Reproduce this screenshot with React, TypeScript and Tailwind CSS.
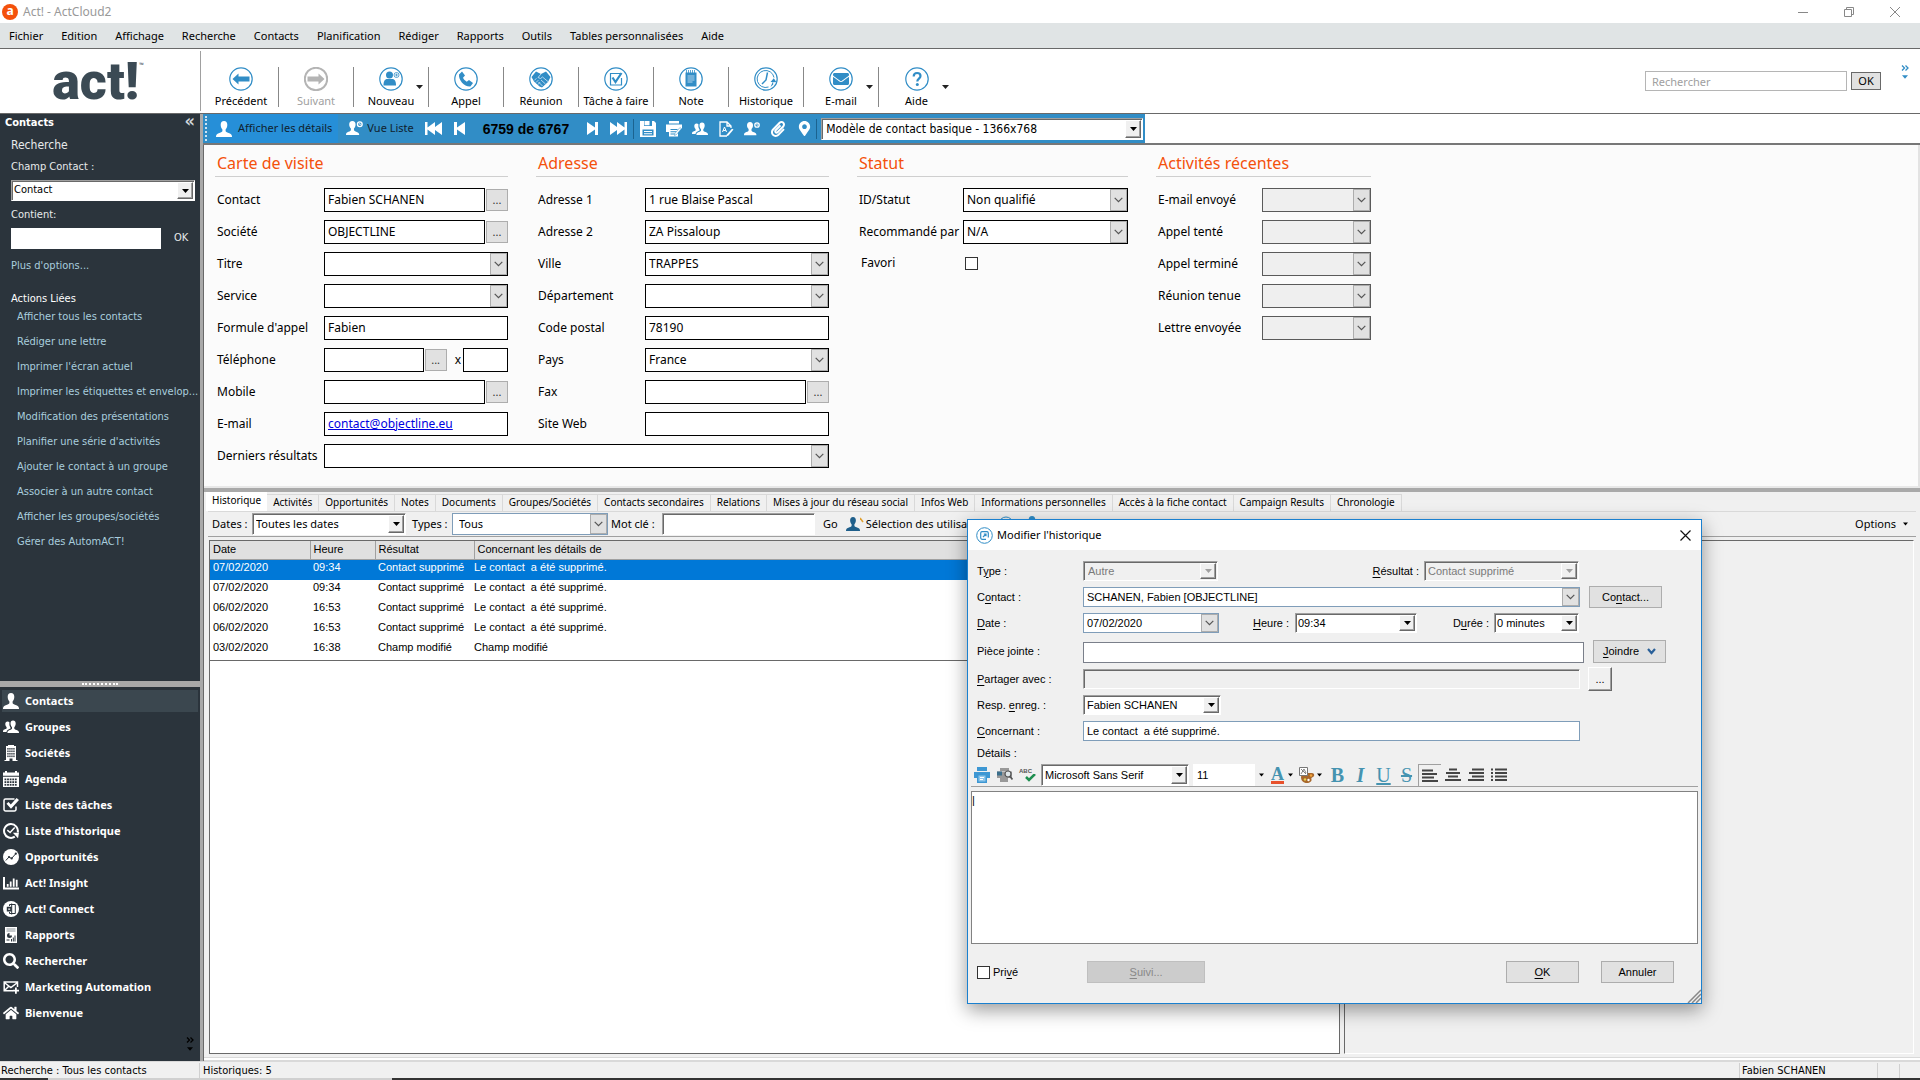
import { useId } from "react";
import type { ReactNode } from "react";
import { FaEnvelope, FaPaperclip, FaMapMarkerAlt, FaHome, FaSearch } from "react-icons/fa";

const tahoma = "font-['Noto_Sans','DejaVu_Sans',sans-serif]";
const sansSerif = "font-['Liberation_Sans','DejaVu_Sans',sans-serif]";
const condensed = "font-['DejaVu_Sans_Condensed','DejaVu_Sans',sans-serif]";

const sunken =
  "border border-t-[#a0a0a0] border-l-[#a0a0a0] border-r-white border-b-white shadow-[inset_1px_1px_0_#696969]";
const raised =
  "border border-t-white border-l-white border-r-[#696969] border-b-[#696969] shadow-[inset_-1px_-1px_0_#a0a0a0]";

const menus = ["Fichier", "Edition", "Affichage", "Recherche", "Contacts", "Planification", "Rédiger", "Rapports", "Outils", "Tables personnalisées", "Aide"];

const actions = [
  "Afficher tous les contacts",
  "Rédiger une lettre",
  "Imprimer l'écran actuel",
  "Imprimer les étiquettes et envelop...",
  "Modification des présentations",
  "Planifier une série d'activités",
  "Ajouter le contact à un groupe",
  "Associer à un autre contact",
  "Afficher les groupes/sociétés",
  "Gérer des AutomACT!",
];

const tabs = [
  "Activités", "Opportunités", "Notes", "Documents", "Groupes/Sociétés", "Contacts secondaires", "Relations",
  "Mises à jour du réseau social", "Infos Web", "Informations personnelles", "Accès à la fiche contact",
  "Campaign Results", "Chronologie",
];

const history = [
  ["07/02/2020", "09:34", "Contact supprimé", "Le contact  a été supprimé."],
  ["07/02/2020", "09:34", "Contact supprimé", "Le contact  a été supprimé."],
  ["06/02/2020", "16:53", "Contact supprimé", "Le contact  a été supprimé."],
  ["06/02/2020", "16:53", "Contact supprimé", "Le contact  a été supprimé."],
  ["03/02/2020", "16:38", "Champ modifié", "Champ modifié"],
];

/* ---------- icons ---------- */

function Svg({ size = 16, children, className = "" }: { size?: number; children: ReactNode; className?: string }) {
  return (
    <svg width={size} height={size} viewBox="0 0 16 16" fill="currentColor" className={`shrink-0 ${className}`} aria-hidden="true">
      {children}
    </svg>
  );
}

const bust = "M8 0c2.2 0 3.3 1.6 3.3 3.8 0 1.9-.7 3.7-1.7 4.6v1.5c0 .8 1.2 1.3 3 2 2 .8 3.4 1.4 3.4 3.6v.5H0v-.5c0-2.200 1.400-2.800 3.400-3.600 1.800-.7 3-1.200 3-2V8.400c-1-.9-1.700-2.700-1.700-4.600C4.700 1.600 5.800 0 8 0z";

function Person({ size = 16, className = "" }: { size?: number; className?: string }) {
  return <Svg size={size} className={className}><path d={bust} /></Svg>;
}

function People({ size = 16 }: { size?: number }) {
  return (
    <Svg size={size}>
      <path d="M4.500 2.500c1 0 1.600.3 2 .9-.5 2.300.2 4 1 5v1.200c-2.500.9-3.600 1.700-4 3.400H0v-.4c0-1.600 1-2 2.400-2.500.9-.3 1.200-.7 1.200-1.200v-.8C2.800 7.400 2.300 6 2.300 4.900c0-1.500.8-2.400 2.200-2.400z" />
      <path d="M10 1.500c1.800 0 2.700 1.300 2.700 3 0 1.500-.6 2.900-1.400 3.700v1.300c0 .6.900 1 2.300 1.500 1.500.6 2.400 1.200 2.400 2.600v.4H4.400v-.4c0-1.400.9-2 2.400-2.600 1.300-.5 2.200-.9 2.200-1.500V8.200c-.8-.8-1.500-2.200-1.500-3.700 0-1.700.8-3 2.500-3z" />
    </Svg>
  );
}

function PersonClock({ size = 16, className = "" }: { size?: number; className?: string }) {
  return (
    <Svg size={size} className={className}>
      <path d="M6 1c2 0 3 1.400 3 3.300 0 1.600-.6 3-1.500 3.800v1.300c0 .8 1.100 1.200 2.600 1.800 1.400.5 2.300 1.300 2.300 2.600v.4H0v-.4c0-1.600 1-2.200 2.300-2.700 1.400-.5 2.300-.9 2.300-1.700V8.100C3.700 7.300 3 5.900 3 4.300 3 2.400 4 1 6 1z" />
      <circle cx="13" cy="4" r="2.200" fill="none" stroke="currentColor" strokeWidth="1.300" />
      <path d="M12.900 2.800v1.400h1.100" fill="none" stroke="currentColor" strokeWidth=".7" />
    </Svg>
  );
}

function Building() {
  return (
    <Svg>
      <path d="M5 0h6v1h2v14h1.500v1h-5v-2.500h-3V16h-5v-1H3V1h2z" />
      <g fill="#2b343c">
        {[3, 5.5, 8, 10.500].map((y) =>
          [4.300, 6.300, 8.300, 10.300].map((x) => <rect key={`${x}-${y}`} x={x} y={y} width="1.300" height="1.600" />)
        )}
      </g>
    </Svg>
  );
}

function Calendar() {
  return (
    <Svg>
      <path d="M0 1.500h2V0h2v1.500h8V0h2v1.500h2v3.300H0zM0 5.800h16V16H0z" />
      <g fill="#2b343c">
        {[7.500, 10.200, 12.900].map((y) =>
          [1.500, 4.100, 6.700, 9.300, 11.900].map((x) => <rect key={`${x}-${y}`} x={x} y={y} width="1.800" height="1.800" />)
        )}
      </g>
    </Svg>
  );
}

function Tasks() {
  return (
    <Svg>
      <path d="M11.500 2H2.500A1.500 1.500 0 0 0 1 3.500v9A1.500 1.500 0 0 0 2.500 14h9a1.500 1.500 0 0 0 1.500-1.500V9.500" fill="none" stroke="currentColor" strokeWidth="1.500" />
      <path d="M3.500 6.800 5.500 5l2.300 2.500L13.600 1 16 3l-8 8.800z" />
    </Svg>
  );
}

function HistoryIcon() {
  return (
    <Svg>
      <path d="M14.700 9.500A6.900 6.900 0 1 0 11.800 13.700" fill="none" stroke="currentColor" strokeWidth="2" />
      <path d="M9.800 9.800H16l-1 5.400z" />
      <path d="M4.300 7.200l2.800 2.300 4.600-5" fill="none" stroke="currentColor" strokeWidth="1.500" />
    </Svg>
  );
}

function Opportunity() {
  return (
    <Svg>
      <circle cx="8" cy="8" r="8" />
      <path d="M2.800 11.500 6 8l2.500 1.500L13 4.500" fill="none" stroke="#2b343c" strokeWidth="1" />
      <g fill="#2b343c"><circle cx="6" cy="8" r="1.100" /><circle cx="8.700" cy="9.400" r="1.100" /><circle cx="12.800" cy="4.700" r="1.100" /></g>
    </Svg>
  );
}

function Bars() {
  return <Svg><path d="M0 2h2v10.500h14V14.500H0zM3.800 9h1.800v2.700H3.800zM6.800 6.500h1.800v5.200H6.800zM9.800 3.500h1.800v8.200H9.800zM12.800 4.800h1.800v6.900h-1.800z" /></Svg>;
}

function Connect() {
  return (
    <Svg>
      <circle cx="8" cy="8" r="8" />
      <path d="M6.500 5V3.500h5.800v9H6.500V11M8.700 2.500v11" fill="none" stroke="#2b343c" strokeWidth="1" />
      <path d="M3.800 5.700h4.800v4.800H3.800zM5.200 7.500v1.200h2V7.500z" fill="#2b343c" />
    </Svg>
  );
}

function Report() {
  return (
    <Svg>
      <path d="M2 0h12v16H2z" />
      <path d="M3.500 1.500h9v1h-9zM3.500 3.500h9v1h-9z" fill="#8d969c" />
      <circle cx="6.500" cy="8.500" r="2.500" fill="#2b343c" />
      <path d="M6.500 8.500V6H9v2.500z" fill="#fff" />
      <path d="M8 12h1v2.500H8zM9.800 10.500h1v4h-1zM11.500 8.500h1v6h-1zM3.500 12.500h3v1h-3z" fill="#2b343c" />
    </Svg>
  );
}

function MailPlus() {
  return (
    <Svg>
      <path d="M10 11.800H1.200V3h13.300v5M1.200 3.500l6.700 5 6.600-5M1.500 11.500l4-4" fill="none" stroke="currentColor" strokeWidth="1.500" />
      <path d="M12 8.500h1.800v2.200H16v1.800h-2.200v2.300H12v-2.300H9.800v-1.800H12z" />
    </Svg>
  );
}

const sections = [
  { label: "Contacts", icon: <Person /> },
  { label: "Groupes", icon: <People /> },
  { label: "Sociétés", icon: <Building /> },
  { label: "Agenda", icon: <Calendar /> },
  { label: "Liste des tâches", icon: <Tasks /> },
  { label: "Liste d'historique", icon: <HistoryIcon /> },
  { label: "Opportunités", icon: <Opportunity /> },
  { label: "Act! Insight", icon: <Bars /> },
  { label: "Act! Connect", icon: <Connect /> },
  { label: "Rapports", icon: <Report /> },
  { label: "Rechercher", icon: <FaSearch size={16} className="-scale-x-100 rotate-0 scale-x-100" /> },
  { label: "Marketing Automation", icon: <MailPlus /> },
  { label: "Bienvenue", icon: <FaHome size={16} /> },
];

function Triangle({ className = "" }: { className?: string }) {
  return (
    <svg width="7" height="4" viewBox="0 0 7 4" fill="currentColor" className={`shrink-0 ${className}`} aria-hidden="true">
      <path d="M0 0h7L3.500 4z" />
    </svg>
  );
}

function Chevron({ className = "" }: { className?: string }) {
  return (
    <svg width="9" height="6" viewBox="0 0 9 6" fill="none" stroke="currentColor" strokeWidth="1.200" className={`shrink-0 ${className}`} aria-hidden="true">
      <path d="M.7.8 4.500 4.700 8.300.8" />
    </svg>
  );
}

function DoubleChevron() {
  return (
    <svg width="8" height="6" viewBox="0 0 8 6" fill="none" stroke="currentColor" strokeWidth="1.300" aria-hidden="true">
      <path d="M1 .5 3.500 3 1 5.500M4.500.5 7 3 4.500 5.500" />
    </svg>
  );
}

function SkipIcon({ double = false, back = false }: { double?: boolean; back?: boolean }) {
  return (
    <svg width={double ? 17 : 11} height="13" viewBox={double ? "0 0 17 13" : "0 0 11 13"} fill="#fff" className={back ? "rotate-180" : ""} aria-hidden="true">
      {double ? <path d="M0 0l7 5V0l7.500 5.500V0H17v13h-2.500V7.500L7 13V8l-7 5z" /> : <path d="M0 0l8 5.500V0h3v13H8V7.500L0 13z" />}
    </svg>
  );
}

function Round({ children, disabled = false }: { children: ReactNode; disabled?: boolean }) {
  return (
    <svg width="24" height="24" viewBox="0 0 24 24" fill="none" className={disabled ? "text-[#b4b4b4]" : "text-[#318dc6]"} aria-hidden="true">
      <circle cx="12" cy="12" r="11.200" stroke="currentColor" strokeWidth={disabled ? 2 : 1.200} />
      {children}
    </svg>
  );
}

const toolbar = [
  { label: "Précédent", icon: <Round><path d="M3.500 12 9.500 6.500v3h11v5h-11v3z" fill="currentColor" /></Round> },
  { label: "Suivant", disabled: true, icon: <Round disabled><path d="M20.500 12l-6-5.500v3h-11v5h11v3z" fill="currentColor" /></Round> },
  {
    label: "Nouveau", arrow: true,
    icon: (
      <Round>
        <circle cx="10.500" cy="8" r="3.500" fill="currentColor" />
        <path d="M4.500 18.500c0-4 1-6.500 4-6.500h4.500c3 0 4 2.500 4 6.500z" fill="currentColor" />
        <circle cx="17.500" cy="8" r="2.500" stroke="currentColor" strokeWidth=".8" />
        <path d="M17.500 6.500v3M16 8h3" stroke="currentColor" strokeWidth=".7" />
      </Round>
    ),
  },
  { label: "Appel", icon: <Round><path d="M5 7.500 8 4.500l3 4-2 2.300c.8 1.600 2 2.900 3.700 3.900l2.300-1.700 4 3-2.600 3.500C10.500 20 4.500 13.500 5 7.500z" fill="currentColor" /></Round> },
  {
    label: "Réunion",
    icon: (
      <Round>
        <path d="M7 4.500 12 7l5-2.500 4.500 5.500-2.500 5-6 5.500-2.500-1L5 14.500 2.500 10z" fill="currentColor" />
        <path d="M12 7l-3 3.500 2.500 1 2-1.500 6 5M12 13l4.500 4M9.500 15l4 4M5.500 13l2-1.500M7 15.500l2.300-2.300M9 17.500l2-2.300" stroke="#d5e9f6" strokeWidth=".8" />
      </Round>
    ),
  },
  {
    label: "Tâche à faire",
    icon: (
      <Round>
        <path d="M16 6.500H6.500v11.500h11v-7" stroke="currentColor" strokeWidth="1.200" />
        <path d="M8.500 10.500 11.500 15l6-9" stroke="currentColor" strokeWidth="2.200" />
      </Round>
    ),
  },
  {
    label: "Note",
    icon: (
      <Round>
        <path d="M6.500 5.500h11v14h-11z" fill="currentColor" />
        <path d="M7.500 3v4M9.500 3v4M11.500 3v4M13.500 3v4M15.500 3v4" stroke="currentColor" strokeWidth=".8" />
        <path d="M8.500 9h7M8.500 11h7M8.500 13h7M8.500 15h5" stroke="#d5e9f6" strokeWidth=".8" />
      </Round>
    ),
  },
  {
    label: "Historique",
    icon: (
      <Round>
        <path d="M14.500 20A8.500 8.500 0 1 1 20 10.500" stroke="currentColor" strokeWidth="1" />
        <path d="M13.500 5.500 12 13l-4 4" stroke="currentColor" strokeWidth="1.500" />
        <path d="M16.500 15l3.300-3.800 2.700 4zM19.200 14v3.500l-2.700 2.500" fill="currentColor" />
      </Round>
    ),
  },
  { label: "E-mail", arrow: true, icon: <Round><FaEnvelope x="4" y="4" size={16} /></Round> },
  {
    label: "Aide", arrow: true,
    icon: (
      <Round>
        <path d="M8.700 9.500c0-2.300 1.400-3.500 3.400-3.500s3.400 1.200 3.400 3c0 2.600-3.200 2.700-3.200 5.500" stroke="currentColor" strokeWidth="2.200" />
        <circle cx="12.300" cy="17.500" r="1.500" fill="currentColor" />
      </Round>
    ),
  },
];

/* ---------- form controls ---------- */

const looks = {
  form: { box: "border border-black bg-white", btn: "w-[17px] border border-[#adadad] bg-[#e1e1e1] text-[#555]" },
  readonly: { box: "border border-[#5a5a5a] bg-[#efefef]", btn: "w-[17px] border border-[#adadad] bg-[#e1e1e1] text-[#555]" },
  flat: { box: "border border-[#7f9db9] bg-white", btn: "w-[17px] border border-[#adadad] bg-[#e1e1e1] text-[#555]" },
  classic: { box: `${sunken} bg-white p-px`, btn: `w-4 bg-[#f0f0f0] text-black ${raised}` },
  disabled: { box: `${sunken} bg-[#f0f0f0] p-px text-[#7a7a7a]`, btn: `w-4 bg-[#f0f0f0] text-[#a0a0a0] ${raised}` },
};

function Combo({ id, label, value = "", look = "form", className = "", pad = "pl-[3px]" }: {
  id?: string; label?: string; value?: string; look?: keyof typeof looks; className?: string; pad?: string;
}) {
  const s = looks[look];
  const classic = look === "classic" || look === "disabled";
  return (
    <div className={`flex min-w-0 ${s.box} ${className}`}>
      <select
        id={id}
        aria-label={label}
        disabled={look === "disabled"}
        className={`min-w-0 flex-1 appearance-none truncate bg-transparent outline-none ${pad}`}
      >
        <option>{value}</option>
      </select>
      <span className={`pointer-events-none flex shrink-0 items-center justify-center ${s.btn}`}>
        {classic ? <Triangle /> : <Chevron />}
      </span>
    </div>
  );
}

function Dots() {
  return <button type="button" aria-label="Parcourir" className="my-px ml-px w-[22px] shrink-0 border border-[#adadad] bg-[#e1e1e1] text-[11px] text-[#333]">...</button>;
}

type FieldProps = { label: string; value?: string; kind?: "text" | "select" | "readonly" | "dots" | "link" | "phone"; wide?: boolean };

function Field({ label, value = "", kind = "text", wide = false }: FieldProps) {
  const id = useId();
  const box = "min-w-0 flex-1 border border-black bg-white pl-[3px] outline-none";
  return (
    <div className="flex h-6">
      <label htmlFor={id} className={`shrink-0 self-center whitespace-nowrap pl-0.5 ${wide ? "w-[106px]" : "w-[109px]"}`}>{label}</label>
      {kind === "select" && <Combo id={id} value={value} className="flex-1" />}
      {kind === "readonly" && <Combo id={id} look="readonly" className="flex-1" />}
      {kind === "text" && <input id={id} defaultValue={value} className={box} />}
      {kind === "link" && <input id={id} defaultValue={value} className={`${box} text-[#0000e0] underline`} />}
      {kind === "dots" && (
        <>
          <input id={id} defaultValue={value} className={box} />
          <Dots />
        </>
      )}
      {kind === "phone" && (
        <>
          <input id={id} className={box} />
          <Dots />
          <span className="ml-2 mr-0.5 self-center">x</span>
          <input aria-label="Poste" className="w-[45px] border border-black bg-white" />
        </>
      )}
    </div>
  );
}

function Section({ title, className = "", children }: { title: string; className?: string; children: ReactNode }) {
  return (
    <section className={`flex flex-col gap-2 ${className}`}>
      <h2 className="mb-[3px] flex h-8 items-center border-b border-[#cfcfcf] pl-0.5 pt-1 text-base text-[#f4510b]">{title}</h2>
      {children}
    </section>
  );
}

/* ---------- window parts ---------- */

function Header() {
  return (
    <header className={`${tahoma} text-[11px]`}>
      <div className="flex h-[23px] items-center bg-white pl-0.5 text-xs text-[#999]">
        <span className="mr-[5px] flex size-4 items-center justify-center rounded-full bg-[#f4510b] pb-0.5 text-xs font-bold text-white">a</span>
        Act! - ActCloud2
        <div className="ml-auto flex items-center gap-9 pr-5">
          <button type="button" aria-label="Réduire"><svg width="10" height="10" stroke="#888"><path d="M0 5.500h10" /></svg></button>
          <button type="button" aria-label="Restaurer"><svg width="10" height="10" fill="none" stroke="#888"><path d="M.5 2.500h7v7h-7zM2.500 2.500v-2h7v7h-2" /></svg></button>
          <button type="button" aria-label="Fermer"><svg width="10" height="10" stroke="#888"><path d="M0 0l10 10M10 0 0 10" /></svg></button>
        </div>
      </div>
      <nav className="flex h-[26px] items-center gap-[18px] border-b border-[#696969] bg-[#e0e4e5] pl-[9px] pt-px text-black">
        {menus.map((m) => <button key={m} type="button">{m}</button>)}
      </nav>
      <div className="flex h-[65px] border-b border-[#696969] bg-white">
        <div className="my-0.5 flex w-[201px] shrink-0 justify-center border-r border-[#a0a0a0] pr-1 pt-1.5 text-[#3b4a54]">
          <span className="font-['Roboto',sans-serif] text-[52px] font-black leading-[50px]">act!</span>
          <span className="pt-1 text-[6px]">™</span>
        </div>
        <div className="flex pl-[3px] pt-[18px]">
          {toolbar.map((t, i) => (
            <div key={t.label} className={`flex h-10 w-[75px] shrink-0 ${i < toolbar.length - 1 ? "border-r border-[#888]" : ""}`}>
              <button type="button" disabled={t.disabled} className={`flex flex-1 flex-col items-center self-start whitespace-nowrap ${t.arrow ? "pl-3" : ""} ${t.disabled ? "text-[#a0a0a0]" : "text-black"}`}>
                {t.icon}
                <span className="leading-5">{t.label}</span>
              </button>
              {t.arrow && <button type="button" aria-label={`Menu ${t.label}`} className="flex w-3 items-center text-[#222]"><Triangle /></button>}
            </div>
          ))}
        </div>
        <div className="ml-auto flex items-start pr-[11px] pt-[22px]">
          <input aria-label="Rechercher" placeholder="Rechercher" className="h-5 w-[202px] border border-[#b5b5b5] pl-1.5 outline-none placeholder:text-[#a0a0a0]" />
          <button type="button" className="ml-1 mt-px h-[18px] w-[30px] border border-[#696969] bg-[#e1e1e1] leading-4">OK</button>
          <div className="-mt-1.5 ml-5 flex w-2 flex-col items-center gap-1 text-[#318dc6]">
            <DoubleChevron />
            <Triangle className="w-[6px]" />
          </div>
        </div>
      </div>
    </header>
  );
}

function Sidebar() {
  return (
    <aside className={`flex w-[200px] shrink-0 flex-col bg-[#2b343c] text-[11px] text-[#e8eaeb] ${condensed}`}>
      <div className="flex h-[567px] flex-col pl-[11px] pr-[5px]">
        <div className="-ml-1.5 flex h-[18px] items-center justify-between font-bold text-white">
          Contacts
          <button type="button" aria-label="Réduire le volet" className="pb-1 text-lg leading-4 text-[#d0d6da]">«</button>
        </div>
        <span className="mt-1 text-xs leading-[18px]">Recherche</span>
        <label htmlFor="champ" className="mt-1 leading-[18px]">Champ Contact :</label>
        <Combo id="champ" value="Contact" look="classic" className="mt-1 h-[21px] text-black" pad="pl-px" />
        <label htmlFor="contient" className="mt-[5px] leading-[18px]">Contient:</label>
        <div className="mt-1 flex h-[21px] items-center">
          <input id="contient" className="h-full w-[150px] bg-white text-black outline-none" />
          <button type="button" className="ml-[13px]">OK</button>
        </div>
        <a href="#options" className="mt-2 leading-[18px] text-[#a9cede]">Plus d'options...</a>
        <span className="mt-4 leading-4 text-white">Actions Liées</span>
        <ul className="pl-1.5 text-[#a9cede]">
          {actions.map((a, i) => (
            <li key={a} className={i === 0 ? "h-[22px] whitespace-nowrap leading-5" : "h-[25px] whitespace-nowrap leading-[25px]"}><a href="#action">{a}</a></li>
          ))}
        </ul>
      </div>
      <div className="flex h-1.5 items-center justify-center bg-[#a9a9a9]">
        <span className="w-9 border-t-2 border-dotted border-white" />
      </div>
      <nav className="px-0.5 pt-[3px]">
        {sections.map((s, i) => (
          <button key={s.label} type="button" className={`mb-1 flex h-[22px] w-full items-center gap-1.5 pl-px text-left font-bold text-white ${tahoma} ${i === 0 ? "bg-[#3b474f]" : ""}`}>
            {s.icon}
            {s.label}
          </button>
        ))}
      </nav>
      <div className="mr-1.5 mt-auto flex w-2 flex-col items-center gap-1 self-end pb-2.5 text-black">
        <DoubleChevron />
        <Triangle className="w-[6px]" />
      </div>
    </aside>
  );
}

function RecordBar() {
  return (
    <div className={`flex h-[31px] shrink-0 border-b-2 border-[#777] bg-white text-[11px] ${tahoma}`}>
      <div className="flex items-center bg-[#318dc6] pr-0.5">
        <span className="ml-0.5 h-[25px] border-l-2 border-dotted border-[#cfe4f3]" />
        <button type="button" className="ml-[3px] flex h-full items-center gap-1.5 bg-[#268fd8] px-1.5 text-[#10222e]">
          <Person className="text-white" />Afficher les détails
        </button>
        <button type="button" className="ml-2 flex items-center gap-1 text-[#10222e]"><PersonClock size={17} className="text-white" />Vue Liste</button>
        <button type="button" aria-label="Premier" className="ml-[11px]"><SkipIcon double back /></button>
        <button type="button" aria-label="Précédent" className="ml-3"><SkipIcon back /></button>
        <span className={`mx-[18px] text-sm font-bold text-black ${sansSerif}`}>6759 de 6767</span>
        <button type="button" aria-label="Suivant"><SkipIcon /></button>
        <button type="button" aria-label="Dernier" className="ml-3"><SkipIcon double /></button>
        <span className="mx-1.5 h-5 border-l border-[#1b6390]" />
        <div className="flex items-center gap-2.5 text-white">
          <button type="button" aria-label="Enregistrer">
            <Svg>
              <path d="M0 0h14l2 2v14H0z" />
              <path d="M4 0h8v5H4zM2.500 8.500h11v6h-11z" fill="#318dc6" />
              <path d="M4.500 0h5v4.300h-5zM4 10h8v1H4zM4 12.300h8v1H4z" />
            </Svg>
          </button>
          <button type="button" aria-label="Imprimer">
            <Svg>
              <path d="M3 0h10v2.500H3zM0 3.500h16v3.700L12 11v4.500H3V11H0z" />
              <path d="M4.500 8.500h7M4.500 10.800h6M4.500 13h5" stroke="#318dc6" strokeWidth="1.100" />
              <path d="M15.500 7.500l-5 6-2 1 .500-2.200 4.800-5.600z" stroke="#318dc6" strokeWidth=".5" />
            </Svg>
          </button>
          <button type="button" aria-label="Groupe"><People /></button>
          <button type="button" aria-label="Lettre">
            <Svg>
              <path d="M9 15H2V1h7l4 4v2M9 1v4h4" fill="none" stroke="currentColor" strokeWidth="1.300" />
              <path d="M4.500 11 6.500 6l2 5M5.200 9.500h2.600" fill="none" stroke="currentColor" />
              <path d="M15.500 8.500l-5 6-2 .8.500-2 5-5.500z" />
            </Svg>
          </button>
          <button type="button" aria-label="Relation"><PersonClock /></button>
          <button type="button" aria-label="Joindre"><FaPaperclip size={16} /></button>
          <button type="button" aria-label="Carte" className="flex w-4 justify-center"><FaMapMarkerAlt size={15} /></button>
        </div>
        <span className="mx-1 h-5 border-l border-[#1b6390]" />
        <Combo label="Présentation" value="Modèle de contact basique - 1366x768" look="classic" className={`h-[22px] w-[322px] text-xs ${condensed}`} />
      </div>
    </div>
  );
}

function ContactForm() {
  return (
    <div className={`flex items-start gap-7 border-b-2 border-r-2 border-b-[#e8e8e8] border-r-[#e3e3e3] bg-[#fbfbfb] pb-[18px] pl-[11px] text-xs text-black ${tahoma}`}>
      <div className="flex w-[614px] shrink-0 flex-col gap-2">
        <div className="grid grid-cols-2 gap-7">
          <Section title="Carte de visite">
            <Field label="Contact" value="Fabien SCHANEN" kind="dots" />
            <Field label="Société" value="OBJECTLINE" kind="dots" />
            <Field label="Titre" kind="select" />
            <Field label="Service" kind="select" />
            <Field label="Formule d'appel" value="Fabien" />
            <Field label="Téléphone" kind="phone" />
            <Field label="Mobile" kind="dots" />
            <Field label="E-mail" value="contact@objectline.eu" kind="link" />
          </Section>
          <Section title="Adresse">
            <Field label="Adresse 1" value="1 rue Blaise Pascal" />
            <Field label="Adresse 2" value="ZA Pissaloup" />
            <Field label="Ville" value="TRAPPES" kind="select" />
            <Field label="Département" kind="select" />
            <Field label="Code postal" value="78190" />
            <Field label="Pays" value="France" kind="select" />
            <Field label="Fax" kind="dots" />
            <Field label="Site Web" />
          </Section>
        </div>
        <Field label="Derniers résultats" kind="select" />
      </div>
      <Section title="Statut" className="w-[271px] shrink-0">
        <Field label="ID/Statut" value="Non qualifié" kind="select" wide />
        <Field label="Recommandé par" value="N/A" kind="select" wide />
        <div className="flex h-[22px] items-center">
          <label htmlFor="favori" className="w-[108px] pl-1">Favori</label>
          <input id="favori" type="checkbox" className="size-[13px] appearance-none border border-[#333] bg-white" />
        </div>
      </Section>
      <Section title="Activités récentes" className="w-[215px] shrink-0">
        {["E-mail envoyé", "Appel tenté", "Appel terminé", "Réunion tenue", "Lettre envoyée"].map((l) => (
          <Field key={l} label={l} kind="readonly" wide />
        ))}
      </Section>
    </div>
  );
}

function HistoryPane() {
  return (
    <div className="flex flex-1 flex-col bg-[#f0f0f0] text-[11px] text-black">
      <div role="tablist" className={`flex h-[19px] items-end pl-0.5 text-[10px] ${tahoma}`}>
        <button type="button" role="tab" aria-selected="true" className="h-full bg-white px-1.5 pb-0.5">Historique</button>
        {tabs.map((t) => (
          <button key={t} type="button" role="tab" aria-selected="false" className="h-[17px] border-r border-t border-[#d9d9d9] px-1.5 pb-0.5">{t}</button>
        ))}
      </div>
      <div className={`mx-1 flex h-[26px] items-center border-b border-t border-b-[#a0a0a0] border-t-[#d9d9d9] ${tahoma}`}>
        <label htmlFor="dates" className="w-11 pl-1">Dates :</label>
        <Combo id="dates" value="Toutes les dates" look="classic" className="h-[22px] w-[154px]" pad="pl-0.5" />
        <label htmlFor="types" className="w-[46px] pl-1.5">Types :</label>
        <Combo id="types" value="Tous" look="flat" className="h-[22px] w-[156px]" pad="pl-1.5" />
        <label htmlFor="mot" className="w-[54px] pl-[3px]">Mot clé :</label>
        <input id="mot" className={`h-[22px] w-[153px] bg-white outline-none ${sunken}`} />
        <button type="button" className="ml-2">Go</button>
        <button type="button" className="ml-2 flex items-center gap-0.5">
          <span className="flex text-[#1f5f8b]">
            <Person size={14} />
            <svg width="4" height="14" viewBox="0 0 4 14" fill="none" stroke="#e0a030" strokeWidth="1.500" aria-hidden="true"><path d="M0 1l3 4" /></svg>
          </span>
          Sélection des utilisateurs
        </button>
        <span className="ml-1 flex items-center gap-2.5 text-[#318dc6]">
          <svg width="16" height="16" fill="none" stroke="currentColor" aria-hidden="true"><circle cx="8" cy="8" r="7" /></svg>
          <Person size={16} />
        </span>
        <button type="button" className="ml-auto mr-2 flex items-center gap-[7px]">Options <Triangle className="w-[5px]" /></button>
      </div>
      <div className="mt-[3px] flex flex-1 gap-1 pl-[5px] pr-1.5">
        <div className={`flex-1 border border-[#696969] bg-white ${sansSerif}`}>
          <table className="w-full table-fixed border-b border-[#696969] leading-[15px]">
            <thead>
              <tr className="h-[18px] border-b border-[#a0a0a0] bg-[#e0e0e0] text-left">
                <th className="w-[100px] border-r border-[#a0a0a0] pl-[3px] font-normal">Date</th>
                <th className="w-[65px] border-r border-[#a0a0a0] pl-[3px] font-normal">Heure</th>
                <th className="w-[99px] border-r border-[#a0a0a0] pl-[3px] font-normal">Résultat</th>
                <th className="pl-[3px] font-normal">Concernant les détails de</th>
              </tr>
            </thead>
            <tbody>
              {history.map((r, i) => (
                <tr key={i} className={`h-5 whitespace-pre ${i === 0 ? "bg-[#0078d7] text-white" : ""}`}>
                  <td className="pb-[5px] pl-[3px]">{r[0]}</td>
                  <td className="pb-[5px] pl-[3px]">{r[1]}</td>
                  <td className="pb-[5px] pl-[3px]">{r[2]}</td>
                  <td className="pb-[5px]">{r[3]}</td>
                </tr>
              ))}
            </tbody>
          </table>
        </div>
        <div className="w-[570px] shrink-0 border border-b-white border-l-[#696969] border-r-white border-t-[#696969]" />
      </div>
      <div className="mt-[3px] h-1 border-b border-t border-[#d9d9d9] bg-white" />
    </div>
  );
}

function Key({ children }: { children: string }) {
  return <span className="underline underline-offset-2">{children}</span>;
}

const tile = "flex items-center justify-center border border-[#adadad] bg-[#e1e1e1]";

function FormatBar() {
  const lines = (xs: number[][], bullets = false) => (
    <svg width="16" height="14" viewBox="0 0 16 14" stroke="#444" strokeWidth="2" aria-hidden="true">
      {xs.map(([a, b], i) => <path key={i} d={`M${a} ${i * 3.500 + 1.500}H${b}`} />)}
      {bullets && <path d="M0 1.500h2M0 5h2M0 8.500h2M0 12h2" />}
    </svg>
  );
  const letter = "flex w-[23px] justify-center font-['Liberation_Serif',serif] text-xl leading-5 text-[#4593b0]";
  return (
    <div className="mx-[3px] mt-[5px] flex h-[23px] items-center border-b border-[#a0a0a0]">
      <button type="button" aria-label="Imprimer" className="flex w-[22px] justify-center text-[#3d97d3]">
        <Svg>
          <path d="M3 0h10v4H3zM0 5h16v6h-3v5H3v-5H0z" />
          <path d="M4.500 8.500h7v6h-7z" fill="#8fc6ea" />
          <path d="M6 10.500h4M6 12.500h3" stroke="#fff" />
        </Svg>
      </button>
      <button type="button" aria-label="Aperçu" className="flex w-[23px] justify-center">
        <Svg>
          <path d="M3 1h9v3H3zM0 4.500h15V11H0zM3 11h8v4H3z" fill="#999" />
          <path d="M0 4.500h5v4H0z" fill="#3b6f8c" />
          <circle cx="11" cy="7" r="3" fill="#dfe7ea" stroke="#555" strokeWidth="1.200" />
          <path d="M13 9.500l2.500 3" stroke="#555" strokeWidth="1.700" />
        </Svg>
      </button>
      <button type="button" aria-label="Orthographe" className="flex w-[25px] flex-col items-start pl-[3px]">
        <span className="text-[6px] font-bold leading-[5px] text-[#555]">ABC</span>
        <svg width="11" height="8" fill="none" stroke="#1f8f50" strokeWidth="2.500" className="self-center" aria-hidden="true"><path d="M1 3l3 3 6-6" /></svg>
      </button>
      <Combo label="Police" value="Microsoft Sans Serif" look="classic" className="h-[22px] w-[148px]" pad="pl-0.5" />
      <div className="ml-1 flex h-full w-[74px] bg-white">
        <select aria-label="Taille" className="min-w-0 flex-1 appearance-none pl-1 outline-none"><option>11</option></select>
        <span className="pointer-events-none flex w-3 items-center justify-center bg-[#f0f0f0]"><Triangle className="w-[5px]" /></span>
      </div>
      <button type="button" aria-label="Couleur" className="ml-1 flex items-center gap-1">
        <span className="border-b-[3px] border-[#e8512c] font-['Liberation_Serif',serif] text-lg font-bold leading-[14px] text-[#4593b0]">A</span>
        <Triangle className="w-[5px]" />
      </button>
      <button type="button" aria-label="Fond" className="ml-1.5 flex items-center gap-0.5">
        <Svg>
          <path d="M3 6h10c2.500 0 3 3 1 4-1.500.8-2 1-1.500 2.500S11 16 8 16c-4 0-6-2.500-6-6z" fill="#a8682c" />
          <circle cx="6" cy="12.500" r="1.200" fill="#e8d24c" /><circle cx="9.500" cy="13" r="1.200" fill="#fff" /><circle cx="12" cy="8.500" r="1.200" fill="#f3a33a" />
          <path d="M.5.500h8v8h-8z" fill="#fff" stroke="#777" />
          <path d="M2 7l3-5 2 4M2 2l5 5" fill="none" stroke="#666" strokeWidth=".8" />
        </Svg>
        <Triangle className="w-[5px]" />
      </button>
      <button type="button" aria-label="Gras" className={`ml-1 font-bold ${letter}`}>B</button>
      <button type="button" aria-label="Italique" className={`font-bold italic ${letter}`}>I</button>
      <button type="button" aria-label="Souligné" className={`underline ${letter}`}>U</button>
      <button type="button" aria-label="Barré" className={`line-through ${letter}`}>S</button>
      <button type="button" aria-label="Aligner à gauche" className="flex h-full w-[23px] items-center justify-center border-l border-t border-[#a0a0a0]">{lines([[0, 11], [0, 15], [0, 12], [0, 16]])}</button>
      <button type="button" aria-label="Centrer" className="flex w-[23px] justify-center">{lines([[4, 12], [1, 15], [3, 13], [0, 16]])}</button>
      <button type="button" aria-label="Aligner à droite" className="flex w-[23px] justify-center">{lines([[4, 16], [1, 16], [4, 16], [0, 16]])}</button>
      <button type="button" aria-label="Liste" className="flex w-[23px] justify-center">{lines([[4, 16], [4, 16], [4, 16], [4, 16]], true)}</button>
    </div>
  );
}

function EditDialog() {
  const label = "w-[106px] shrink-0";
  return (
    <div role="dialog" aria-label="Modifier l'historique" className={`absolute left-[967px] top-[519px] w-[735px] border border-[#1a80cf] bg-[#f0f0f0] text-[11px] text-black shadow-[0_6px_18px_rgba(0,0,0,0.4)] ${sansSerif}`}>
      <div className={`flex h-[30px] items-center bg-white pl-2 pr-2.5 ${tahoma}`}>
        <svg width="17" height="17" viewBox="0 0 17 17" fill="none" stroke="#318dc6" className="mr-1" aria-hidden="true">
          <circle cx="8.500" cy="8.500" r="7.800" />
          <path d="M10 12.300H6A1.500 1.500 0 0 1 4.700 11V6A1.500 1.500 0 0 1 6 4.700h5A1.500 1.500 0 0 1 12.300 6v4.500M7 10l3-3M7.800 7H10v2.200" strokeWidth="1.200" />
        </svg>
        Modifier l'historique
        <button type="button" aria-label="Fermer" className="ml-auto"><svg width="11" height="11" stroke="#111" strokeWidth="1.200"><path d="M.5.500l10 10M10.500.500l-10 10" /></svg></button>
      </div>
      <div className="flex flex-col gap-1.5 pl-[9px] pt-[11px]">
        <div className="flex h-5 items-center">
          <label htmlFor="d-type" className={label}>T<Key>y</Key>pe :</label>
          <Combo id="d-type" value="Autre" look="disabled" className="h-5 w-[135px]" />
          <label htmlFor="d-res" className="ml-auto mr-[5px]"><Key>R</Key>ésultat :</label>
          <Combo id="d-res" value="Contact supprimé" look="disabled" className="mr-[122px] h-5 w-[155px]" pad="pl-0.5" />
        </div>
        <div className="flex h-5 items-center">
          <label htmlFor="d-contact" className={label}>C<Key>o</Key>ntact :</label>
          <Combo id="d-contact" value="SCHANEN, Fabien [OBJECTLINE]" look="flat" className="h-5 flex-1" />
          <button type="button" className={`ml-[9px] mr-[39px] h-[22px] w-[73px] ${tile}`}>Co<Key>n</Key>tact...</button>
        </div>
        <div className="flex h-5 items-center">
          <label htmlFor="d-date" className={label}><Key>D</Key>ate :</label>
          <Combo id="d-date" value="07/02/2020" look="flat" className="h-5 w-[136px]" />
          <label htmlFor="d-heure" className="ml-[34px] w-[42px]"><Key>H</Key>eure :</label>
          <Combo id="d-heure" value="09:34" look="classic" className="h-5 w-[122px]" pad="pl-px" />
          <label htmlFor="d-duree" className="ml-auto mr-[5px]">D<Key>u</Key>rée :</label>
          <Combo id="d-duree" value="0 minutes" look="classic" className="mr-[122px] h-5 w-[85px]" pad="pl-px" />
        </div>
        <div className="flex h-6 items-end">
          <label htmlFor="d-piece" className={`self-center ${label}`}>Pièce jointe :</label>
          <input id="d-piece" className="h-[21px] min-w-0 flex-1 border border-[#7a7f8a] bg-white outline-none" />
          <button type="button" className={`ml-[9px] mr-[35px] h-[23px] w-[73px] gap-2 ${tile}`}>
            <span><Key>J</Key>oindre</span>
            <svg width="9" height="7" fill="none" stroke="#2a6099" strokeWidth="2.200" aria-hidden="true"><path d="M1 1l3.500 4L8 1" /></svg>
          </button>
        </div>
        <div className="flex h-5 items-center">
          <label htmlFor="d-part" className={label}><Key>P</Key>artager avec :</label>
          <input id="d-part" readOnly className={`h-5 min-w-0 flex-1 bg-[#efefef] outline-none ${sunken}`} />
          <button type="button" className={`ml-2 mr-[89px] h-6 w-6 shrink-0 bg-[#f0f0f0] ${raised}`}>...</button>
        </div>
        <div className="flex h-5 items-center">
          <label htmlFor="d-resp" className={label}>Resp. <Key>e</Key>nreg. :</label>
          <Combo id="d-resp" value="Fabien SCHANEN" look="classic" className="h-5 w-[138px]" pad="pl-0.5" />
        </div>
        <div className="flex h-5 items-center">
          <label htmlFor="d-conc" className={label}><Key>C</Key>oncernant :</label>
          <input id="d-conc" defaultValue="Le contact  a été supprimé." className="mr-[121px] h-5 min-w-0 flex-1 border border-[#7f9db9] bg-white pl-[3px] outline-none" />
        </div>
        <label htmlFor="d-details" className="leading-3">Détails :</label>
      </div>
      <FormatBar />
      <div className="px-[3px] pt-1">
        <textarea id="d-details" className="block h-[153px] w-full resize-none border border-[#828282] bg-white outline-none" defaultValue="|" />
      </div>
      <div className="flex items-center pb-5 pl-[9px] pr-[27px] pt-[17px]">
        <input id="d-prive" type="checkbox" className="size-[13px] appearance-none border border-[#333] bg-white" />
        <label htmlFor="d-prive" className="ml-[3px]">Pri<Key>v</Key>é</label>
        <button type="button" disabled className="ml-[69px] h-[22px] w-[118px] border border-[#bfbfbf] bg-[#cccccc] text-[#888]"><Key>S</Key>uivi...</button>
        <button type="button" className={`ml-auto h-[22px] w-[73px] ${tile}`}><Key>O</Key>K</button>
        <button type="button" className={`ml-[22px] h-[22px] w-[73px] ${tile}`}>Annuler</button>
      </div>
      <svg width="14" height="14" stroke="#888" className="absolute bottom-0 right-0" aria-hidden="true">
        <path d="M1 14 14 1M5 14l9-9M9 14l5-5" strokeWidth="1.500" />
      </svg>
    </div>
  );
}

export default function App() {
  return (
    <div className="relative flex min-h-screen flex-col bg-[#f0f0f0]">
      <Header />
      <main className="flex flex-1">
        <Sidebar />
        <div className="w-[3px] shrink-0 bg-[#a9a9a9]" />
        <div className="flex min-w-0 flex-1 flex-col">
          <RecordBar />
          <div className="flex flex-1 flex-col border-l border-[#696969]">
            <ContactForm />
            <div className="h-1 bg-[#a9a9a9]" />
            <HistoryPane />
          </div>
        </div>
      </main>
      <footer className={`flex h-[17px] items-center border-t border-[#d9d9d9] bg-[#f0f0f0] pt-0.5 text-[11px] text-black ${condensed}`}>
        <span className="w-[200px] border-r border-[#d0d0d0] pl-px">Recherche : Tous les contacts</span>
        <span className="pl-[3px]">Historiques: 5</span>
        <span className="ml-auto w-[139px] border-x border-[#d0d0d0] pl-0.5">Fabien SCHANEN</span>
        <span className="h-full w-[22px] border-r border-[#d0d0d0]" />
        <span className="w-5" />
      </footer>
      <div className="flex h-0.5 bg-[#333]">
        <span className="ml-12 w-[344px] bg-[#d0d0d0]" />
      </div>
      <EditDialog />
    </div>
  );
}
